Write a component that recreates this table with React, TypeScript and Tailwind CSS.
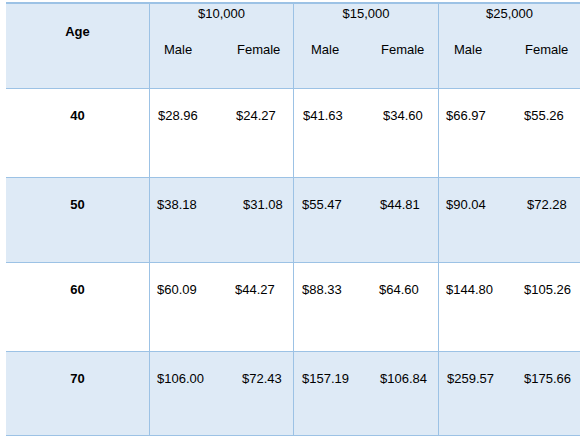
const groups = ["$10,000", "$15,000", "$25,000"];

// per group: [malePad, femaleStart] for header
const headerPos = [
  ["pl-[14px]", "w-[87px]"],
  ["pl-[17px]", "w-[87px]"],
  ["pl-[15px]", "w-[86px]"],
];

type Cell = { m: string; f: string; mp: string; fw: string };

const rows: { age: string; h: string; bg: string; cells: Cell[] }[] = [
  {
    age: "40",
    h: "h-[89px]",
    bg: "bg-white",
    cells: [
      { m: "$28.96", f: "$24.27", mp: "pl-[8px]", fw: "w-[86px]" },
      { m: "$41.63", f: "$34.60", mp: "pl-[9px]", fw: "w-[89px]" },
      { m: "$66.97", f: "$55.26", mp: "pl-[7px]", fw: "w-[85px]" },
    ],
  },
  {
    age: "50",
    h: "h-[85px]",
    bg: "bg-[#deeaf6]",
    cells: [
      { m: "$38.18", f: "$31.08", mp: "pl-[7px]", fw: "w-[93px]" },
      { m: "$55.47", f: "$44.81", mp: "pl-[8px]", fw: "w-[86px]" },
      { m: "$90.04", f: "$72.28", mp: "pl-[7px]", fw: "w-[88px]" },
    ],
  },
  {
    age: "60",
    h: "h-[89px]",
    bg: "bg-white",
    cells: [
      { m: "$60.09", f: "$44.27", mp: "pl-[7px]", fw: "w-[85px]" },
      { m: "$88.33", f: "$64.60", mp: "pl-[8px]", fw: "w-[85px]" },
      { m: "$144.80", f: "$105.26", mp: "pl-[7px]", fw: "w-[85px]" },
    ],
  },
  {
    age: "70",
    h: "h-[84px]",
    bg: "bg-[#deeaf6]",
    cells: [
      { m: "$106.00", f: "$72.43", mp: "pl-[7px]", fw: "w-[92px]" },
      { m: "$157.19", f: "$106.84", mp: "pl-[8px]", fw: "w-[86px]" },
      { m: "$259.57", f: "$175.66", mp: "pl-[8px]", fw: "w-[85px]" },
    ],
  },
];

const colW = ["w-[144px] border-r", "w-[145px] border-r", "flex-1"];

export default function App() {
  return (
    <div className="w-[580px] h-[437px] bg-white overflow-hidden font-['Liberation_Sans',Arial,sans-serif] text-[13px] leading-[16px] text-black">
      <div className="ml-[6px] mt-[2px] w-[574px] border-t-2 border-[#9cc2e5]">
        {/* header */}
        <div className="flex h-[85px] bg-[#deeaf6] border-b border-[#9cc2e5]">
          <div className="w-[144px] border-r border-[#9cc2e5] pt-[20px] text-center font-bold">Age</div>
          {groups.map((g, i) => (
            <div key={g} className={`${colW[i]} border-[#9cc2e5] pt-[2px]`}>
              <div className="text-center">{g}</div>
              <div className="flex mt-[20px]">
                <span className={`${headerPos[i][0]} ${headerPos[i][1]} shrink-0`}>Male</span>
                <span>Female</span>
              </div>
            </div>
          ))}
        </div>

        {rows.map((r) => (
          <div key={r.age} className={`flex ${r.h} ${r.bg} border-b border-[#9cc2e5]`}>
            <div className="w-[144px] border-r border-[#9cc2e5] pt-[19px] text-center font-bold">{r.age}</div>
            {r.cells.map((c, i) => (
              <div key={i} className={`${colW[i]} border-[#9cc2e5] pt-[19px] flex`}>
                <span className={`${c.mp} ${c.fw} shrink-0`}>{c.m}</span>
                <span>{c.f}</span>
              </div>
            ))}
          </div>
        ))}
      </div>
    </div>
  );
}
